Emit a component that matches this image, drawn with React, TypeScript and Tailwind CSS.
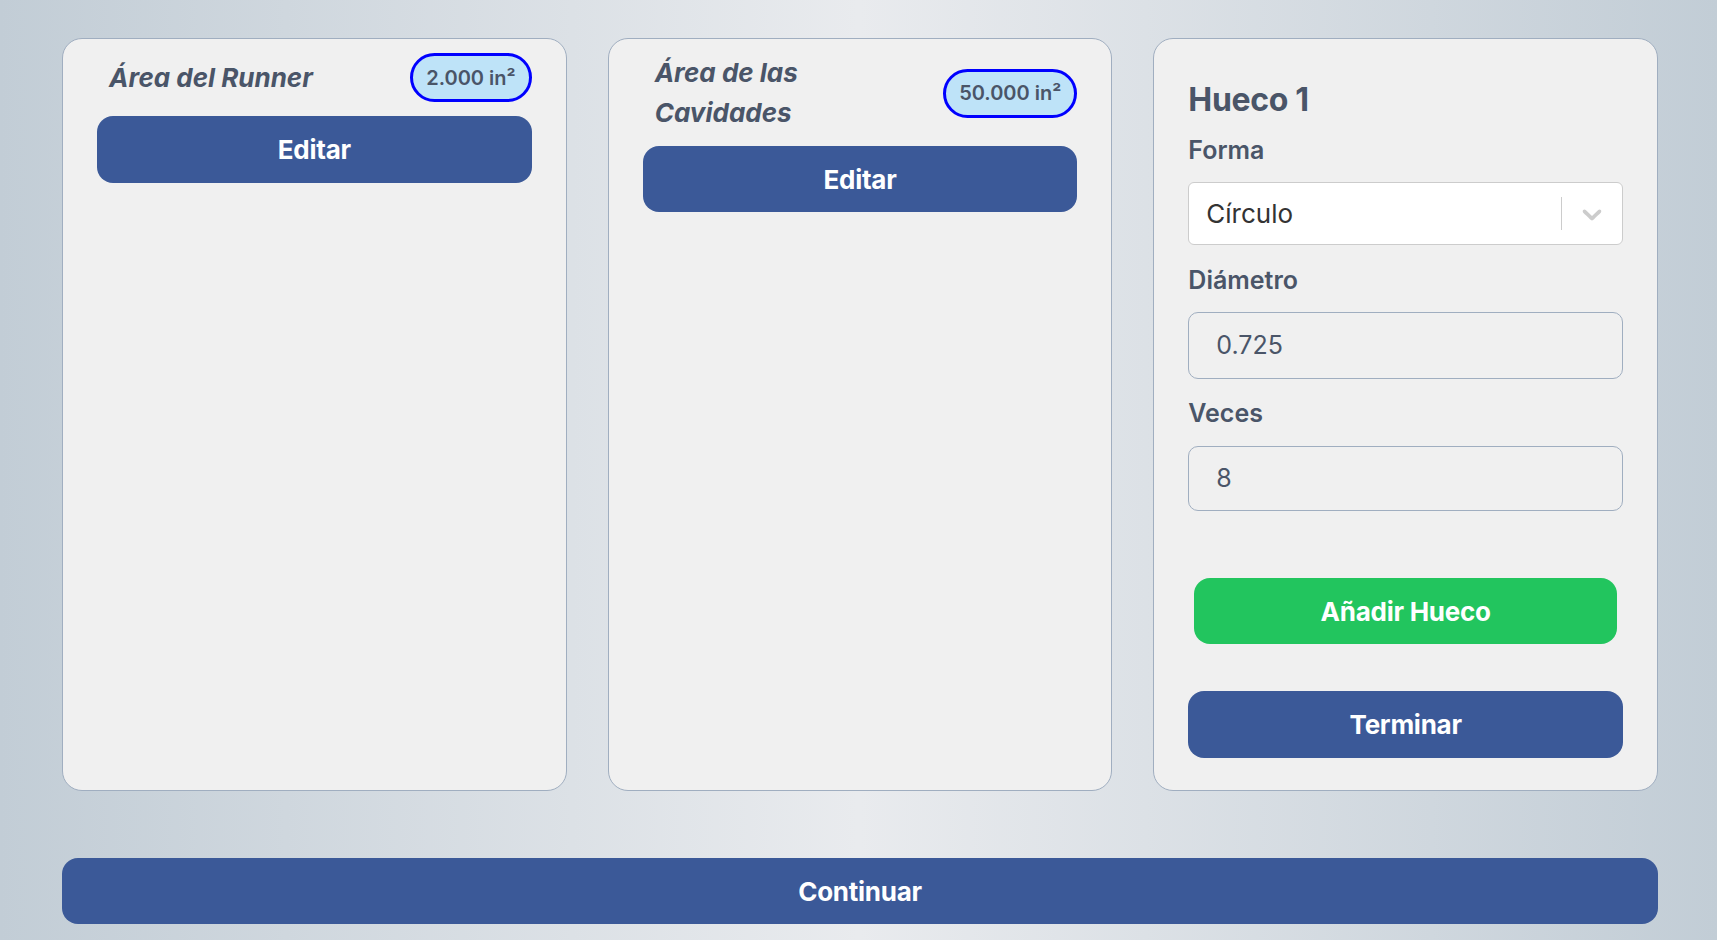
import React from "react";

const font = { fontFamily: "Inter, 'Noto Sans', sans-serif" };

function Badge({ children }: { children: React.ReactNode }) {
  return (
    <div className="flex h-[49px] shrink-0 items-center rounded-full border-[3px] border-[#0000ff] bg-[#bee3f8] px-[13px] text-[20px] font-semibold leading-[28px] text-[#4a5568]">
      {children}
    </div>
  );
}

function BlueButton({ label, className = "" }: { label: string; className?: string }) {
  return (
    <button
      className={
        "flex w-full items-center justify-center rounded-2xl bg-[#3b5998] text-[26px] font-bold tracking-[-0.01em] text-white " +
        className
      }
    >
      {label}
    </button>
  );
}

export default function App() {
  return (
    <div
      style={font}
      className="min-h-[940px] w-full bg-[linear-gradient(to_right,#c2cdd6,#e9ebee_50%,#c2cdd6)] pl-[62px] pr-[59px] pt-[38px]"
    >
      <div className="grid h-[753px] grid-cols-3 gap-[41px]">
        {/* Card 1 */}
        <div className="flex flex-col rounded-[20px] border border-[#a0aec0] bg-[#f0f0f0] px-[34px] pt-[14px]">
          <div className="flex items-center justify-between gap-4">
            <h2 className="pl-3 text-[26px] font-bold italic leading-[40px] text-[#4a5568]">
              Área del Runner
            </h2>
            <Badge>2.000 in²</Badge>
          </div>
          <BlueButton label="Editar" className="mt-[14px] h-[67px]" />
        </div>

        {/* Card 2 */}
        <div className="flex flex-col rounded-[20px] border border-[#a0aec0] bg-[#f0f0f0] px-[34px] pt-[14px]">
          <div className="flex items-center justify-between gap-4">
            <h2 className="pl-3 text-[26px] font-bold italic leading-[40px] text-[#4a5568]">
              <span className="block">Área de las</span>
              <span className="block">Cavidades</span>
            </h2>
            <Badge>50.000 in²</Badge>
          </div>
          <BlueButton label="Editar" className="mt-[13px] h-[66px]" />
        </div>

        {/* Card 3 */}
        <div className="flex flex-col rounded-[20px] border border-[#a0aec0] bg-[#f0f0f0] px-[34px] pt-[41px]">
          <h2 className="text-[32px] font-bold leading-[40px] tracking-[-0.01em] text-[#4a5568]">Hueco 1</h2>
          <label className="mt-[14px] text-[25px] font-semibold leading-[32px] text-[#4a5568]">Forma</label>
          <div className="mt-[16px] flex h-[63px] items-center rounded-[6px] border border-[#cccccc] bg-white">
            <div className="flex-1 pl-[17px] text-[26px] text-[#333333]">Círculo</div>
            <div className="h-[33px] w-px bg-[#cccccc]" />
            <div className="flex w-[60px] items-center justify-center">
              <svg width="32" height="32" viewBox="0 0 20 20" fill="#cccccc">
                <path d="M4.516 7.548c0.436-0.446 1.043-0.481 1.576 0l3.908 3.747 3.908-3.747c0.533-0.481 1.141-0.446 1.574 0 0.436 0.445 0.408 1.197 0 1.615-0.406 0.418-4.695 4.502-4.695 4.502-0.217 0.223-0.502 0.335-0.787 0.335s-0.57-0.112-0.789-0.335c0 0-4.287-4.084-4.695-4.502s-0.436-1.17 0-1.615z" />
              </svg>
            </div>
          </div>
          <label className="mt-[19px] text-[25px] font-semibold leading-[32px] text-[#4a5568]">Diámetro</label>
          <div className="mt-[16px] flex h-[67px] items-center rounded-[10px] border border-[#a0aec0] pl-[27px] text-[25px] text-[#4a5568]">
            0.725
          </div>
          <label className="mt-[18px] text-[25px] font-semibold leading-[32px] text-[#4a5568]">Veces</label>
          <div className="mt-[17px] flex h-[65px] items-center rounded-[10px] border border-[#a0aec0] pl-[27px] text-[25px] text-[#4a5568]">
            8
          </div>
          <button className="mx-[6px] mt-[67px] flex h-[66px] items-center justify-center rounded-2xl bg-[#22c55e] text-[26px] font-bold tracking-[-0.01em] text-white">
            Añadir Hueco
          </button>
          <BlueButton label="Terminar" className="mt-[47px] h-[67px]" />
        </div>
      </div>

      <BlueButton label="Continuar" className="mt-[67px] h-[66px]" />
    </div>
  );
}
